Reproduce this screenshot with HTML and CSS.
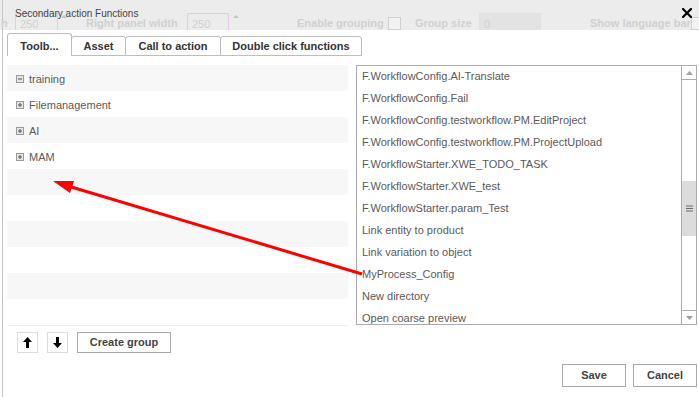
FILE: index.html
```html
<!DOCTYPE html>
<html>
<head>
<meta charset="utf-8">
<title>Secondary action Functions</title>
<link rel="stylesheet" href="styles.css">
</head>
<body>
<div class="page">
  <div class="titlebar">
    <div class="backdrop">
      <span class="f-text f-h">h</span>
      <span class="f-input f-pink">250</span>
      <span class="f-spin"><i class="sp-up"></i><i class="sp-dn"></i></span>
      <span class="f-text w101">Right panel width</span>
      <span class="f-input f-pink w42">250</span>
      <span class="f-spin ml3"><i class="sp-up"></i><i class="sp-dn"></i></span>
      <span class="f-text w91 ml58">Enable grouping</span>
      <span class="f-check"></span>
      <span class="f-text w64 ml14">Group size</span>
      <span class="f-input f-grey">0</span>
      <span class="f-text w101 ml49">Show language bar</span>
      <span class="f-check"></span>
    </div>
    <div class="title">Secondary action Functions</div>
    <div class="close"><svg width="10" height="10" viewBox="0 0 10 10"><path d="M1 1 L9 9 M9 1 L1 9" stroke="#000" stroke-width="2.2" stroke-linecap="square"/></svg></div>
  </div>

  <div class="tabs">
    <div class="tab active t1">Toolb...</div>
    <div class="tab t2">Asset</div>
    <div class="tab t3">Call to action</div>
    <div class="tab t4">Double click functions</div>
  </div>

  <div class="panes">
    <div class="tree">
      <div class="row"><svg class="ico" width="8" height="8" viewBox="0 0 8 8"><rect x="0.5" y="0.5" width="7" height="7" fill="#e4e4e4" stroke="#9a9a9a"/><path d="M2 4 H6" stroke="#555" stroke-width="1"/></svg><span>training</span></div>
      <div class="row"><svg class="ico" width="8" height="8" viewBox="0 0 8 8"><rect x="0.5" y="0.5" width="7" height="7" fill="#e4e4e4" stroke="#9a9a9a"/><path d="M2 4 H6 M4 2 V6" stroke="#555" stroke-width="1"/></svg><span>Filemanagement</span></div>
      <div class="row"><svg class="ico" width="8" height="8" viewBox="0 0 8 8"><rect x="0.5" y="0.5" width="7" height="7" fill="#e4e4e4" stroke="#9a9a9a"/><path d="M2 4 H6 M4 2 V6" stroke="#555" stroke-width="1"/></svg><span>AI</span></div>
      <div class="row"><svg class="ico" width="8" height="8" viewBox="0 0 8 8"><rect x="0.5" y="0.5" width="7" height="7" fill="#e4e4e4" stroke="#9a9a9a"/><path d="M2 4 H6 M4 2 V6" stroke="#555" stroke-width="1"/></svg><span>MAM</span></div>
      <div class="row"></div>
      <div class="row"></div>
      <div class="row"></div>
      <div class="row"></div>
      <div class="row"></div>
      <div class="row"></div>
    </div>

    <div class="list">
      <div class="items">
        <div class="item">F.WorkflowConfig.AI-Translate</div>
        <div class="item">F.WorkflowConfig.Fail</div>
        <div class="item">F.WorkflowConfig.testworkflow.PM.EditProject</div>
        <div class="item">F.WorkflowConfig.testworkflow.PM.ProjectUpload</div>
        <div class="item">F.WorkflowStarter.XWE_TODO_TASK</div>
        <div class="item">F.WorkflowStarter.XWE_test</div>
        <div class="item">F.WorkflowStarter.param_Test</div>
        <div class="item">Link entity to product</div>
        <div class="item">Link variation to object</div>
        <div class="item">MyProcess_Config</div>
        <div class="item">New directory</div>
        <div class="item">Open coarse preview</div>
      </div>
      <div class="scroll">
        <div class="sb-btn sb-up"><svg width="7" height="4" viewBox="0 0 7 4"><path d="M0 4 L3.5 0 L7 4 Z" fill="#a0a0a0"/></svg></div>
        <div class="sb-track">
          <div class="sb-thumb"><svg width="7" height="7" viewBox="0 0 7 7"><path d="M0 1 H7 M0 3.5 H7 M0 6 H7" stroke="#6a6a6a" stroke-width="1"/></svg></div>
        </div>
        <div class="sb-btn sb-dn"><svg width="7" height="4" viewBox="0 0 7 4"><path d="M0 0 L3.5 4 L7 0 Z" fill="#a0a0a0"/></svg></div>
      </div>
    </div>
  </div>

  <div class="tools">
    <div class="ibtn"><svg width="9" height="11" viewBox="0 0 9 11"><path d="M4.5 0 L9 5 L6 5 L6 11 L3 11 L3 5 L0 5 Z" fill="#000"/></svg></div>
    <div class="ibtn"><svg width="9" height="11" viewBox="0 0 9 11"><path d="M4.5 11 L9 6 L6 6 L6 0 L3 0 L3 6 L0 6 Z" fill="#000"/></svg></div>
    <div class="btn create">Create group</div>
  </div>

  <div class="footer">
    <div class="btn action">Save</div>
    <div class="btn action">Cancel</div>
  </div>

  <svg class="annot" width="699" height="397" viewBox="0 0 699 397">
    <line x1="362" y1="274" x2="68" y2="186" stroke="#ff0000" stroke-width="3"/>
    <polygon points="53,181 74,181 70,193" fill="#ff0000"/>
  </svg>
</div>
</body>
</html>
```

FILE: styles.css
```css
html, body {
  margin: 0;
  padding: 0;
}
body {
  width: 699px;
  height: 397px;
  overflow: hidden;
  background: #fff;
  font-family: "Liberation Sans", Arial, sans-serif;
}
.page {
  position: relative;
  width: 699px;
  height: 397px;
  background: linear-gradient(to right, #fff 2px, #c4c4c4 2px, #c4c4c4 3px, #fff 3px);
}

/* title bar with faded backdrop */
.titlebar {
  position: relative;
  height: 30px;
  overflow: hidden;
  background: linear-gradient(to right, #ececec 2px, #c8c8c8 2px, #c8c8c8 3px, #ececec 3px);
}
.backdrop {
  display: flex;
  align-items: flex-start;
  padding-top: 13px;
  white-space: nowrap;
}
.f-text {
  font-size: 11px;
  font-weight: bold;
  color: #d0d0d0;
  line-height: 20px;
  flex: none;
}
.f-h { width: 7px; margin-left: 1px; }
.f-input {
  box-sizing: border-box;
  height: 22px;
  width: 43px;
  font-size: 11px;
  line-height: 20px;
  padding-left: 4px;
  color: #cfcfcf;
  flex: none;
}
.f-pink { border: 1px solid #ebc6eb; margin-left: 7px; background: #ececec; }
.f-pink.w42 { width: 42px; margin-left: 0; }
.f-grey { width: 62px; background: #e3e3e3; border: 1px solid #e0e0e0; }
.f-spin {
  width: 7px;
  height: 18px;
  margin-left: 2px;
  margin-right: 19px;
  display: flex;
  flex-direction: column;
  justify-content: space-between;
  align-items: center;
  padding-top: 2px;
  flex: none;
}
.f-spin.ml3 { margin-left: 3px; margin-right: 0; }
.sp-up, .sp-dn {
  width: 0; height: 0;
  border-left: 3px solid transparent;
  border-right: 3px solid transparent;
}
.sp-up { border-bottom: 3px solid #c4c4c4; }
.sp-dn { border-top: 3px solid #c4c4c4; }
.w101 { width: 101px; }
.w91 { width: 91px; }
.w64 { width: 64px; }
.ml58 { margin-left: 58px; }
.ml14 { margin-left: 14px; }
.ml49 { margin-left: 49px; }
.f-check {
  box-sizing: border-box;
  width: 13px;
  height: 13px;
  margin-top: 4px;
  border: 1px solid #cfcfcf;
  background: #f2f2f2;
  flex: none;
}
.title {
  position: absolute;
  left: 15px;
  top: 7px;
  font-size: 10px;
  line-height: 13px;
  color: #444;
}
.close {
  position: absolute;
  left: 682px;
  top: 8px;
  width: 10px;
  height: 10px;
}
.close svg { display: block; }

/* tabs */
.tabs {
  display: flex;
  align-items: flex-end;
  height: 23px;
  margin-top: 3px;
  padding-left: 7px;
}
.tab {
  box-sizing: border-box;
  height: 20px;
  border: 1px solid #bdbdbd;
  border-radius: 3px 3px 0 0;
  background: #fff;
  font-size: 11px;
  font-weight: bold;
  color: #333;
  line-height: 18px;
  text-align: center;
  margin-left: -1px;
}
.tab.active {
  height: 23px;
  border-bottom: none;
  padding-top: 3px;
  margin-left: 0;
}
.t1 { width: 65px; }
.t2 { width: 55px; }
.t3 { width: 96px; }
.t4 { width: 142px; }

/* panes */
.panes {
  display: flex;
  gap: 8px;
  margin-top: 9px;
  padding-left: 7px;
}
.tree {
  width: 341px;
  border-bottom: 1px solid #eeeeee;
}
.row {
  height: 26px;
  display: flex;
  align-items: center;
  padding-left: 9px;
  padding-top: 1px;
  box-sizing: border-box;
  font-size: 11px;
  color: #5a5a5a;
}
.row:nth-child(odd) { background: #f7f7f7; }
.ico { display: block; margin-right: 5px; flex: none; }

.list {
  box-sizing: border-box;
  width: 341px;
  height: 260px;
  border: 1px solid #ababab;
  display: flex;
}
.items {
  flex: 1;
  overflow: hidden;
  margin-top: -1px;
}
.item {
  height: 22px;
  line-height: 22px;
  padding-left: 5px;
  font-size: 11px;
  color: #5a5a5a;
  white-space: nowrap;
}
.scroll {
  width: 14px;
  border-left: 1px solid #ababab;
  display: flex;
  flex-direction: column;
}
.sb-btn {
  height: 13px;
  display: flex;
  align-items: center;
  justify-content: center;
  flex: none;
}
.sb-btn svg { display: block; }
.sb-up { border-bottom: 1px solid #ababab; }
.sb-dn { border-top: 1px solid #ababab; }
.sb-track { flex: 1; }
.sb-thumb {
  margin-top: 101px;
  height: 55px;
  background: #dcdcdc;
  display: flex;
  align-items: center;
  justify-content: center;
}
.sb-thumb svg { display: block; }

/* tools */
.tools {
  display: flex;
  gap: 9px;
  margin-top: 6px;
  padding-left: 17px;
}
.ibtn {
  box-sizing: border-box;
  width: 21px;
  height: 21px;
  border: 1px solid #dcdcdc;
  display: flex;
  align-items: center;
  justify-content: center;
}
.ibtn svg { display: block; }
.btn {
  box-sizing: border-box;
  border: 1px solid #a8a8a8;
  background: #fff;
  font-size: 11px;
  font-weight: bold;
  color: #444;
  text-align: center;
}
.create {
  width: 94px;
  height: 21px;
  line-height: 18px;
}
.footer {
  display: flex;
  justify-content: flex-end;
  gap: 7px;
  margin-top: 11px;
  padding-right: 2px;
}
.action {
  width: 64px;
  height: 23px;
  line-height: 21px;
}

.annot {
  position: absolute;
  left: 0;
  top: 0;
  pointer-events: none;
}
```
